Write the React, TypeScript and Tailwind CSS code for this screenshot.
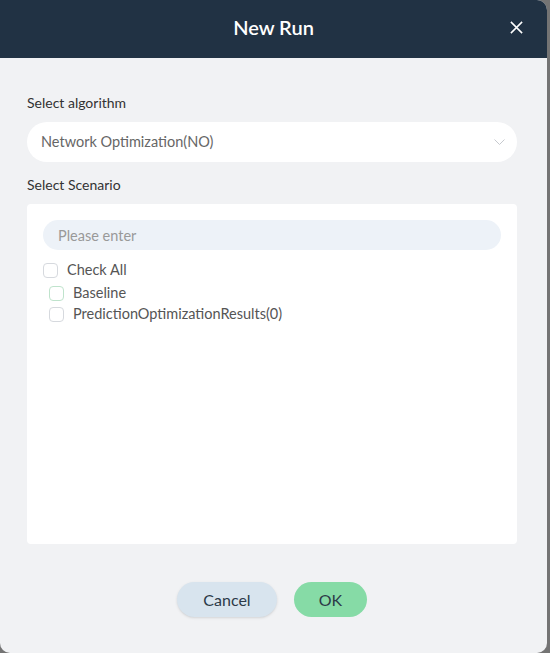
import React, { useState } from 'react';

const scenarios = ['Baseline', 'PredictionOptimizationResults(0)'];

const Checkbox: React.FC<{ checked: boolean; green?: boolean; onChange: () => void }> = ({ checked, green, onChange }) => (
  <button
    onClick={onChange}
    className={`h-[15px] w-[15px] rounded-[4px] border bg-white ${green ? 'border-[#bfe3cc]' : 'border-[#d6d9de]'} flex items-center justify-center`}
  >
    {checked && (
      <svg className="w-2.5 h-2.5" viewBox="0 0 12 12" fill="none" stroke="#4caf72" strokeWidth={2}>
        <path d="M2 6l3 3 5-6" />
      </svg>
    )}
  </button>
);

const App: React.FC = () => {
  const [checked, setChecked] = useState<Record<string, boolean>>({});
  const allChecked = scenarios.every((s) => checked[s]);

  const toggleAll = () => {
    const next: Record<string, boolean> = {};
    scenarios.forEach((s) => (next[s] = !allChecked));
    setChecked(next);
  };

  return (
    <div className="h-[653px] w-[550px] bg-[#747474] font-['Lato',sans-serif] overflow-hidden">
      <div className="w-[547px] h-[653px] bg-[#f1f2f4] rounded-tr-[10px] rounded-b-[10px] overflow-hidden flex flex-col">
        {/* header */}
        <div className="h-[58px] shrink-0 bg-[#213244] flex items-center justify-center relative pb-[4px]">
          <h2 className="text-[20px] font-semibold text-white">New Run</h2>
          <button className="absolute right-[23px] top-[20px] text-white">
            <svg className="w-[15px] h-[15px]" viewBox="0 0 16 16" fill="none" stroke="currentColor" strokeWidth={1.6}>
              <path d="M2 2l12 12M14 2L2 14" />
            </svg>
          </button>
        </div>

        {/* body */}
        <div className="flex-1 px-[27px] pt-[36px] pr-[30px] flex flex-col">
          <label className="text-[14px] text-[#333] leading-[18px]">Select algorithm</label>
          <div className="mt-[10px] h-[40px] bg-white rounded-full flex items-center justify-between pl-[14px] pr-[12px]">
            <span className="text-[14.5px] text-[#666]">Network Optimization(NO)</span>
            <svg className="w-[11px] h-[7px]" viewBox="0 0 11 7" fill="none" stroke="#c6c9ce" strokeWidth={1}>
              <path d="M0.5 0.5l5 5 5-5" />
            </svg>
          </div>

          <label className="mt-[14px] text-[14px] text-[#333] leading-[18px]">Select Scenario</label>
          <div className="mt-[10px] h-[340px] bg-white rounded-[4px] px-[16px] pt-[16px]">
            <input
              placeholder="Please enter"
              className="w-full h-[30px] rounded-full bg-[#edf2f8] px-[15px] text-[14.5px] text-[#333] placeholder:text-[#999] outline-none"
            />
            <div className="mt-[12px] flex items-center gap-[9px] h-[16px]">
              <Checkbox checked={allChecked} onChange={toggleAll} />
              <span className="text-[14.5px] text-[#555]">Check All</span>
            </div>
            <div className="pl-[6px] mt-[7px] flex flex-col gap-[5px]">
              {scenarios.map((s, i) => (
                <div key={s} className="flex items-center gap-[9px] h-[16px]">
                  <Checkbox
                    checked={!!checked[s]}
                    green={i === 0}
                    onChange={() => setChecked({ ...checked, [s]: !checked[s] })}
                  />
                  <span className="text-[14.5px] text-[#555]">{s}</span>
                </div>
              ))}
            </div>
          </div>

          <div className="mt-[38px] flex justify-center gap-[17px]">
            <button className="h-[35px] w-[100px] rounded-full bg-[#d8e4ee] text-[16px] text-[#2c3a48] shadow-sm">
              Cancel
            </button>
            <button className="h-[35px] w-[73px] rounded-full bg-[#86dba6] text-[16px] text-[#2c3a48]">
              OK
            </button>
          </div>
        </div>
      </div>
    </div>
  );
};

export default App;
